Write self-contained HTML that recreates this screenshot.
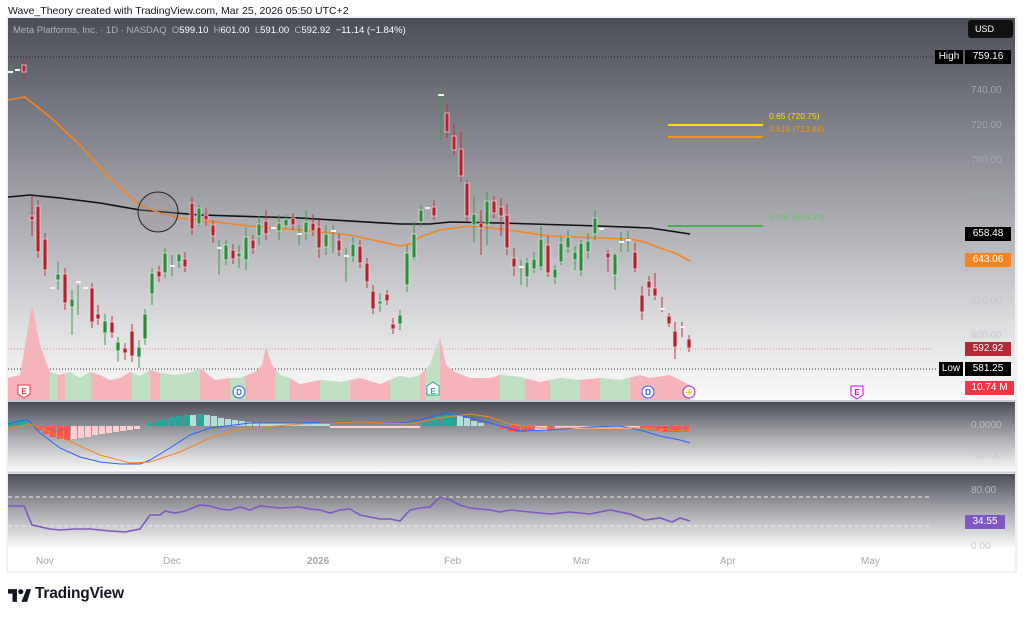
<!DOCTYPE html>
<html><head><meta charset="utf-8"><style>
html,body{margin:0;padding:0;background:#fff;width:1024px;height:617px;overflow:hidden;font-family:"Liberation Sans",sans-serif}
.t{position:absolute;white-space:nowrap}
</style></head><body>
<div class="t" style="left:8px;top:5px;font-size:10.5px;color:#131722">Wave_Theory created with TradingView.com, Mar 25, 2026 05:50 UTC+2</div>
<svg width="1024" height="617" style="position:absolute;left:0;top:0" xmlns="http://www.w3.org/2000/svg">
<defs>
<linearGradient id="gm" x1="0" y1="0" x2="0" y2="1"><stop offset="0" stop-color="#4b4d58"/><stop offset="0.45" stop-color="#9d9ea4"/><stop offset="0.8" stop-color="#dddde0"/><stop offset="1" stop-color="#fafafa"/></linearGradient>
<linearGradient id="gp" x1="0" y1="0" x2="0" y2="1"><stop offset="0" stop-color="#4b4d58"/><stop offset="0.5" stop-color="#a8a9ae"/><stop offset="1" stop-color="#fbfbfb"/></linearGradient>
<clipPath id="cg"><rect x="50" y="300" width="8" height="100"/><rect x="65" y="300" width="26" height="100"/><rect x="132" y="300" width="18" height="100"/><rect x="160" y="300" width="40" height="100"/><rect x="230" y="300" width="15" height="100"/><rect x="275" y="300" width="15" height="100"/><rect x="320" y="300" width="30" height="100"/><rect x="390" y="300" width="30" height="100"/><rect x="425" y="300" width="15" height="100"/><rect x="500" y="300" width="25" height="100"/><rect x="550" y="300" width="30" height="100"/><rect x="600" y="300" width="30" height="100"/></clipPath>
</defs>
<rect x="7" y="17" width="1009" height="555" fill="#fff" stroke="#e0e3eb"/>
<rect x="8" y="18" width="1007" height="382" fill="url(#gm)"/>
<rect x="8" y="402" width="1007" height="69" fill="url(#gp)"/>
<rect x="8" y="474" width="1007" height="74" fill="url(#gp)"/>
<line x1="8" y1="401" x2="1015" y2="401" stroke="#c9cbd1" stroke-width="2"/>
<line x1="8" y1="472.5" x2="1015" y2="472.5" stroke="#c9cbd1" stroke-width="2"/>
<line x1="8" y1="57" x2="936" y2="57" stroke="#222" stroke-dasharray="1,2"/>
<line x1="8" y1="349" x2="932" y2="349" stroke="#d88" stroke-dasharray="1,2"/>
<line x1="8" y1="369" x2="938" y2="369" stroke="#333" stroke-dasharray="1,2"/>
<g>
<polygon fill="#f4b4b9" points="8,400 8,378 20,375 32,305 40,345 50,372 60,375 70,372 80,378 90,372 100,375 110,380 120,378 130,372 140,376 150,370 160,373 175,375 190,373 200,368 215,380 230,378 240,378 255,372 262,365 266,347 272,365 280,375 290,378 300,384 320,380 340,382 360,378 380,384 400,376 410,378 420,375 430,365 440,337 446,365 455,372 470,378 490,378 500,375 520,377 540,382 560,378 580,380 600,378 620,380 640,375 650,378 670,375 680,380 690,385 690,400"/>
<polygon clip-path="url(#cg)" fill="#bfe0c2" points="8,400 8,378 20,375 32,305 40,345 50,372 60,375 70,372 80,378 90,372 100,375 110,380 120,378 130,372 140,376 150,370 160,373 175,375 190,373 200,368 215,380 230,378 240,378 255,372 262,365 266,347 272,365 280,375 290,378 300,384 320,380 340,382 360,378 380,384 400,376 410,378 420,375 430,365 440,337 446,365 455,372 470,378 490,378 500,375 520,377 540,382 560,378 580,380 600,378 620,380 640,375 650,378 670,375 680,380 690,385 690,400"/>
</g>
<polyline fill="none" stroke="#111" stroke-width="1.6" points="8,197 30,195 60,198 100,203 140,210 200,215 300,218 400,224 430,224 450,222 500,223 600,226 650,228 690,234"/>
<polyline fill="none" stroke="#f7841e" stroke-width="1.6" points="8,100 25,97 50,117 80,145 110,178 140,205 160,213 180,218 250,226 300,230 350,235 400,246 410,244 420,237 440,230 470,226 500,229 550,236 600,238 630,239 645,242 660,248 675,253 690,261"/>
<circle cx="158" cy="212" r="20" fill="rgba(160,140,150,0.3)" stroke="#222" stroke-width="1"/>
<line x1="668" y1="125" x2="763" y2="125" stroke="#ffe000" stroke-width="2"/>
<line x1="668" y1="137" x2="763" y2="137" stroke="#f89606" stroke-width="2"/>
<line x1="668" y1="226" x2="763" y2="226" stroke="#4caf50" stroke-width="2"/>
<path stroke="#c0313d" stroke-width="1" fill="none" d="M24 58V80M32 196V236M38 200V258M45 233V276M65 268V310M92 283V328M98 305V325M112 316V338M125 343V360M132 324V362M159 266V282M185 252V272M192 197V235M206 208V226M213 220V243M233 244V264M253 235V254M266 210V240M293 213V230M313 214V236M319 220V258M339 234V256M360 240V268M367 258V288M373 285V314M387 290V305M393 318V334M434 200V220M447 104V138M454 124V155M461 132V182M467 180V222M481 210V255M494 196V218M501 198V236M507 204V255M514 248V276M548 236V277M608 250V272M635 243V272M642 286V320M649 276V296M655 273V300M669 313V327M675 322V359M689 335V352M682 322V337M662 297V312"/>
<path stroke="#3a9b48" stroke-width="1" fill="none" d="M11 65V78M58 262V290M72 290V335M105 314V345M118 337V362M139 340V368M145 309V345M152 268V305M165 248V278M179 253V268M199 205V226M226 240V265M239 245V268M246 227V270M259 216V245M279 215V240M286 215V228M306 210V240M326 225V255M353 237V262M380 293V312M400 310V330M407 245V292M414 222V260M421 205V227M474 195V243M487 192V245M527 258V287M534 252V273M541 226V270M555 265V284M561 237V265M568 230V253M575 246V270M581 240V276M588 233V259M595 210V240M615 253V290M628 231V252M621 232V252M441 84V140M172 255V276M78 285V315M219 240V275M299 225V245M333 225V253M346 248V282M521 260V285"/>
<path fill="#b2222e" stroke="#f2d8da" stroke-width="0.8" d="M22 65h4V72h-4ZM30 216h4V220h-4ZM36 206h4V252h-4ZM43 239h4V270h-4ZM63 274h4V303h-4ZM90 288h4V322h-4ZM96 314h4V319h-4ZM110 322h4V333h-4ZM123 348h4V353h-4ZM130 331h4V356h-4ZM157 271h4V277h-4ZM183 259h4V267h-4ZM190 203h4V229h-4ZM204 215h4V220h-4ZM211 225h4V236h-4ZM231 250h4V259h-4ZM251 240h4V249h-4ZM264 221h4V234h-4ZM291 218h4V225h-4ZM311 223h4V231h-4ZM317 227h4V248h-4ZM337 240h4V251h-4ZM358 246h4V263h-4ZM365 263h4V282h-4ZM371 291h4V309h-4ZM385 294h4V301h-4ZM391 324h4V329h-4ZM432 207h4V216h-4ZM445 113h4V132h-4ZM452 136h4V150h-4ZM459 149h4V176h-4ZM465 183h4V216h-4ZM479 223h4V228h-4ZM492 201h4V213h-4ZM499 207h4V216h-4ZM505 215h4V248h-4ZM512 258h4V267h-4ZM546 245h4V273h-4ZM606 253h4V258h-4ZM633 252h4V269h-4ZM640 295h4V312h-4ZM647 281h4V288h-4ZM653 288h4V296h-4ZM667 316h4V324h-4ZM673 331h4V347h-4ZM687 339h4V348h-4Z"/>
<path fill="#2e8a3c" stroke="#d8ecd9" stroke-width="0.8" d="M56 274h4V280h-4ZM70 299h4V307h-4ZM103 321h4V333h-4ZM116 342h4V351h-4ZM137 347h4V357h-4ZM143 314h4V339h-4ZM150 273h4V294h-4ZM163 253h4V273h-4ZM177 254h4V262h-4ZM197 208h4V224h-4ZM224 245h4V260h-4ZM237 253h4V257h-4ZM244 237h4V260h-4ZM257 224h4V236h-4ZM277 223h4V231h-4ZM284 219h4V226h-4ZM304 222h4V233h-4ZM324 234h4V247h-4ZM351 244h4V257h-4ZM378 301h4V304h-4ZM398 315h4V324h-4ZM405 253h4V285h-4ZM412 234h4V258h-4ZM419 210h4V222h-4ZM472 214h4V225h-4ZM485 201h4V225h-4ZM525 262h4V277h-4ZM532 259h4V269h-4ZM539 239h4V267h-4ZM553 269h4V278h-4ZM559 243h4V262h-4ZM566 237h4V248h-4ZM573 252h4V260h-4ZM579 243h4V271h-4ZM586 241h4V252h-4ZM593 218h4V234h-4ZM613 254h4V275h-4Z"/>
<path stroke="#f4f4f4" stroke-width="2" d="M8 72h5M15 70h5M50 288h5M76 282h5M83 288h5M170 266h5M217 248h5M271 228h5M297 234h5M331 231h5M344 256h5M425 208h5M438 95h6M519 267h5M599 229h5M619 242h5M626 240h5M660 309h5M680 327h5"/>
<g font-family="Liberation Sans" font-size="8" font-weight="bold" text-anchor="middle">
<path d="M18 385h12v9l-6 4l-6-4z" fill="#fff" stroke="#f23645"/><text x="24" y="394" fill="#f23645">E</text>
<circle cx="239" cy="392" r="6" fill="#fff" stroke="#2962ff"/><text x="239" y="395" fill="#2962ff">D</text>
<path d="M427 386l6-4l6 4v9h-12z" fill="#fff" stroke="#22ab94"/><text x="433" y="394" fill="#22ab94">E</text>
<circle cx="648" cy="392" r="6" fill="#fff" stroke="#2962ff"/><text x="648" y="395" fill="#2962ff">D</text>
<circle cx="689" cy="392" r="6" fill="#fff" stroke="#9c27b0"/><text x="689" y="395" fill="#9c27b0">⚡</text>
<path d="M851 386h12v9l-6 4l-6-4z" fill="#fff" stroke="#d500f9"/><text x="857" y="395" fill="#d500f9">E</text>
</g>
<line x1="8" y1="426" x2="930" y2="426" stroke="#999" stroke-dasharray="1,2" stroke-width="0.5"/>
<g fill="#26a69a"><rect x="8" y="421" width="6" height="5"/><rect x="15" y="420" width="6" height="6"/><rect x="22" y="420" width="5" height="6"/>
<rect x="148" y="423" width="6" height="3"/><rect x="155" y="421" width="6" height="5"/><rect x="162" y="419" width="6" height="7"/><rect x="169" y="417" width="6" height="9"/><rect x="176" y="416" width="6" height="10"/><rect x="183" y="415" width="6" height="11"/><rect x="197" y="414" width="6" height="12"/>
<rect x="422" y="422" width="6" height="4"/><rect x="429" y="419" width="6" height="7"/><rect x="436" y="416" width="6" height="10"/><rect x="443" y="414" width="6" height="12"/><rect x="450" y="413" width="6" height="13"/></g>
<g fill="#b2dfdb"><rect x="190" y="415" width="6" height="11"/><rect x="204" y="415" width="6" height="11"/><rect x="211" y="416" width="6" height="10"/><rect x="218" y="418" width="6" height="8"/><rect x="225" y="419" width="6" height="7"/><rect x="232" y="420" width="6" height="6"/><rect x="239" y="421" width="6" height="5"/><rect x="246" y="422" width="6" height="4"/><rect x="253" y="423" width="6" height="3"/><rect x="260" y="423" width="40" height="3"/><rect x="300" y="424" width="30" height="2"/>
<rect x="457" y="415" width="6" height="11"/><rect x="464" y="418" width="6" height="8"/><rect x="471" y="421" width="6" height="5"/><rect x="478" y="423" width="6" height="3"/></g>
<g fill="#ff5252"><rect x="36" y="426" width="6" height="4"/><rect x="43" y="426" width="6" height="8"/><rect x="50" y="426" width="6" height="11"/><rect x="57" y="426" width="6" height="13"/><rect x="64" y="426" width="6" height="14"/>
<rect x="500" y="426" width="6" height="3"/><rect x="507" y="426" width="6" height="5"/><rect x="514" y="426" width="6" height="6"/><rect x="521" y="426" width="6" height="6"/><rect x="528" y="426" width="6" height="5"/><rect x="548" y="426" width="6" height="4"/><rect x="641" y="426" width="6" height="3"/><rect x="648" y="426" width="6" height="4"/><rect x="655" y="426" width="6" height="5"/><rect x="662" y="426" width="6" height="6"/><rect x="669" y="426" width="6" height="6"/><rect x="676" y="426" width="6" height="6"/><rect x="683" y="426" width="6" height="6"/></g>
<g fill="#ffcdd2"><rect x="71" y="426" width="6" height="13"/><rect x="78" y="426" width="6" height="12"/><rect x="85" y="426" width="6" height="11"/><rect x="92" y="426" width="6" height="9"/><rect x="99" y="426" width="6" height="8"/><rect x="106" y="426" width="6" height="7"/><rect x="113" y="426" width="6" height="6"/><rect x="120" y="426" width="6" height="5"/><rect x="127" y="426" width="6" height="4"/><rect x="134" y="426" width="6" height="3"/><rect x="330" y="426" width="90" height="2"/><rect x="535" y="426" width="12" height="5"/><rect x="555" y="426" width="85" height="3"/></g>
<polyline fill="none" stroke="#2962ff" stroke-width="1" points="8,424 20,421 28,420 40,433 60,448 80,457 100,462 120,464 140,464 150,460 170,448 190,435 210,428 250,423 300,423 350,422 400,423 420,420 440,414 455,414 470,418 490,423 520,431 550,430 590,427 620,426 640,430 660,436 680,440 690,443"/>
<polyline fill="none" stroke="#f7841e" stroke-width="1" points="8,429 30,424 50,432 80,446 100,455 130,463 150,462 180,452 210,438 240,429 300,424 360,422 410,424 440,418 470,414 490,417 510,424 540,428 600,428 640,428 690,431"/>
<line x1="8" y1="497" x2="932" y2="497" stroke="#eee" stroke-dasharray="4,3"/>
<line x1="8" y1="526" x2="932" y2="526" stroke="#eee" stroke-dasharray="4,3"/>
<polyline fill="none" stroke="#7e57c2" stroke-width="1.6" points="8,506 24,506 32,525 50,529 60,530 75,529 90,529 110,531 125,532 140,529 150,515 160,515 165,511 175,513 185,511 200,505 210,506 220,509 230,510 240,507 250,510 260,506 280,508 300,507 310,509 320,510 330,513 340,510 350,509 360,515 380,519 390,519 400,521 410,510 420,508 430,507 440,497 450,500 460,505 470,508 490,510 500,512 510,510 530,512 550,514 570,512 590,514 610,510 630,514 645,520 660,518 672,522 680,518 690,521"/>
</svg>
<div class="t" style="left:13px;top:25px;font-size:9.5px;color:#b0b3bc">Meta Platforms, Inc. · 1D · NASDAQ &nbsp;O<span style="color:#fff">599.10</span> &nbsp;H<span style="color:#fff">601.00</span> &nbsp;L<span style="color:#fff">591.00</span> &nbsp;C<span style="color:#fff">592.92</span> &nbsp;<span style="color:#fff">−11.14 (−1.84%)</span></div>
<div class="t" style="left:769px;top:111px;font-size:8.5px;color:#ffe000">0.65 (720.75)</div>
<div class="t" style="left:769px;top:124px;font-size:8.5px;color:#f89606">0.618 (713.88)</div>
<div class="t" style="left:769px;top:212px;font-size:8.5px;color:#6abf6e">0.382 (664.23)</div>
<div class="t" style="left:968px;top:20px;width:45px;height:18px;background:#111;border-radius:3px;color:#fff;font-size:9px;line-height:18px;padding-left:7px;box-sizing:border-box">USD</div>
<div class="t" style="left:935px;top:50px;width:28px;height:14px;background:#000;color:#fff;font-size:10px;line-height:14px;text-align:center">High</div>
<div class="t" style="left:965px;top:50px;width:46px;height:14px;background:#000;color:#fff;font-size:10px;line-height:14px;text-align:center">759.16</div>
<div style="position:absolute;left:971px;font-size:10px;color:#a3a6af">
<div class="t" style="top:85px">740.00</div><div class="t" style="top:120px">720.00</div><div class="t" style="top:155px">700.00</div><div class="t" style="top:190px">680.00</div><div class="t" style="top:296px;color:#c4c6cc">620.00</div><div class="t" style="top:330px;color:#c8cace">600.00</div>
<div class="t" style="top:420px;color:#b8bac0">0.0000</div><div class="t" style="top:450px;color:#c8cace">−25.00</div><div class="t" style="top:485px;color:#b8bac0">80.00</div><div class="t" style="top:541px;color:#c8cace">0.00</div></div>
<div class="t" style="left:965px;top:227px;width:46px;height:14px;background:#000;color:#fff;font-size:10px;line-height:14px;text-align:center">658.48</div>
<div class="t" style="left:965px;top:253px;width:46px;height:14px;background:#f7841e;color:#fff;font-size:10px;line-height:14px;text-align:center">643.06</div>
<div class="t" style="left:965px;top:342px;width:46px;height:14px;background:#b22833;color:#fff;font-size:10px;line-height:14px;text-align:center">592.92</div>
<div class="t" style="left:939px;top:362px;width:24px;height:14px;background:#000;color:#fff;font-size:10px;line-height:14px;text-align:center">Low</div>
<div class="t" style="left:965px;top:362px;width:46px;height:14px;background:#000;color:#fff;font-size:10px;line-height:14px;text-align:center">581.25</div>
<div class="t" style="left:965px;top:381px;width:49px;height:14px;background:#f23645;color:#fff;font-size:10px;line-height:14px;text-align:center">10.74 M</div>
<div class="t" style="left:965px;top:515px;width:40px;height:14px;background:#7e57c2;color:#fff;font-size:10px;line-height:14px;text-align:center">34.55</div>
<div style="position:absolute;top:556px;font-size:10px;color:#a3a6af">
<div class="t" style="left:36px">Nov</div><div class="t" style="left:163px">Dec</div><div class="t" style="left:307px;font-weight:bold">2026</div><div class="t" style="left:444px">Feb</div><div class="t" style="left:573px">Mar</div><div class="t" style="left:720px">Apr</div><div class="t" style="left:861px">May</div></div>
<svg style="position:absolute;left:8px;top:589px" width="23" height="13" viewBox="0 0 36 20"><path d="M14 20H7V7H0V0h14v20zM30 20h-9L29 0h7L30 20z" fill="#131722"/><circle cx="20" cy="4" r="4" fill="#131722"/></svg>
<div class="t" style="left:35px;top:585px;font-size:15.5px;font-weight:bold;color:#131722;letter-spacing:-0.2px">TradingView</div>
</body></html>
